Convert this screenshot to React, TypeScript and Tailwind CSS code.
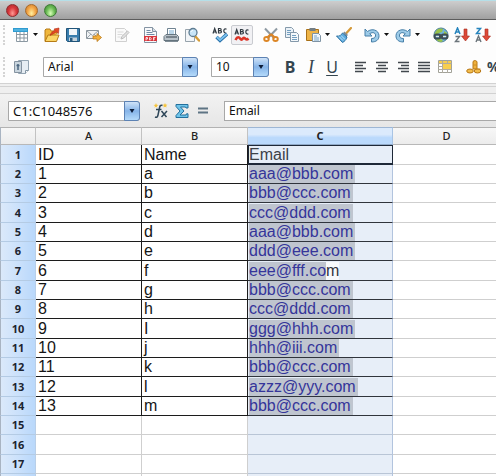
import type { ReactNode } from 'react'

const people = [
  { name: 'a', email: 'aaa@bbb.com' },
  { name: 'b', email: 'bbb@ccc.com' },
  { name: 'c', email: 'ccc@ddd.com' },
  { name: 'd', email: 'aaa@bbb.com' },
  { name: 'e', email: 'ddd@eee.com' },
  { name: 'f', email: 'eee@fff.co', tail: 'm' },
  { name: 'g', email: 'bbb@ccc.com' },
  { name: 'h', email: 'ccc@ddd.com' },
  { name: 'I', email: 'ggg@hhh.com' },
  { name: 'j', email: 'hhh@iii.com' },
  { name: 'k', email: 'bbb@ccc.com' },
  { name: 'l', email: 'azzz@yyy.com' },
  { name: 'm', email: 'bbb@ccc.com' },
]

const emptyRows = [15, 16, 17]

function Icon({ children }: { children: ReactNode }) {
  return (
    <svg viewBox="0 0 16 16" className="block size-4 shrink-0" fill="none" aria-hidden="true">
      {children}
    </svg>
  )
}

function Tool({ label, arrow, children }: { label: string; arrow?: boolean; children: ReactNode }) {
  return (
    <button type="button" aria-label={label} title={label} className="flex shrink-0 items-center">
      <Icon>{children}</Icon>
      {arrow && (
        <svg viewBox="0 0 10 6" className="h-1.5 w-2.5 shrink-0" aria-hidden="true">
          <path d="M4 1h5L6.500 4z" fill="#111" />
        </svg>
      )}
    </button>
  )
}

function Group({ children }: { children: ReactNode }) {
  return <div className="flex shrink-0 items-center gap-[5px]">{children}</div>
}

function Grip() {
  return <div className="h-5 w-0 shrink-0 border-l-2 border-dotted border-[#d4d4d4]" />
}

function Combo({ label, value, className }: { label: string; value: string; className: string }) {
  return (
    <div className={`relative h-5 shrink-0 ${className}`}>
      <select
        aria-label={label}
        className="block h-5 w-full appearance-none rounded-r-[3px] border border-[#a8a8a8] bg-white pl-1 leading-[18px] text-[#111] outline-none"
        defaultValue={value}
      >
        <option>{value}</option>
      </select>
      <span className="pointer-events-none absolute inset-y-0 right-0 flex w-4 items-center justify-center rounded-r-[3px] border border-[#5c82b4] bg-linear-to-b from-[#cfe3f8] via-[#86b4e8] to-[#b4dafa]">
        <svg viewBox="0 0 8 6" className="h-1.5 w-2" aria-hidden="true">
          <path d="M1.500 1h5L4 5z" fill="#0c1c38" />
        </svg>
      </span>
    </div>
  )
}

function Lines({ rows }: { rows: string }) {
  return <path d={rows} stroke="#42484e" strokeWidth="1.300" />
}

function StandardToolbar() {
  return (
    <div className="flex h-[30px] items-center gap-3 bg-[#fdfdfd] pl-[3px]">
      <Grip />
      <div className="-ml-1 flex shrink-0 items-center">
        <Group>
          <Tool label="New" arrow>
            <path d="M3.500 3.500h11v11h-11z" fill="#fff" stroke="#8b98a2" />
            <path d="M3 7.500h12M3 11h12M7 4v11M11 4v11" stroke="#8b98a2" />
            <path d="M0 1h15v4H0z" fill="#2f9bd0" />
            <path d="M1 3h13" stroke="#75c9ed" />
          </Tool>
          <Tool label="Open">
            <path d="M1 14V3l1-1h4l1 2h6v3" fill="#f0b73d" stroke="#b67b16" />
            <path d="M1 14.500 4 8h11l-2.500 6.500z" fill="#fbd565" stroke="#b67b16" />
            <path d="M6 8.500C7 5.500 9 4 11 3.500L10 2l5-1-.5 5.500-1.500-1.500C11 5.500 9 7 6 8.500z" fill="#e54a24" stroke="#b02e15" strokeWidth=".6" />
          </Tool>
          <Tool label="Save">
            <path d="M1.500 1.500h13v13h-12l-1-1z" fill="#397dad" stroke="#205479" />
            <path d="M4 2h8v6H4z" fill="#f2f6f9" />
            <path d="M4 10.500h8V14H4z" fill="#c6d3dc" />
            <path d="M5 11h2.500v3H5z" fill="#2a5d82" />
          </Tool>
          <Tool label="E-mail">
            <path d="M.5 3.500h12v8H.5z" fill="#f1f3f5" stroke="#8b959d" />
            <path d="m1 4 5.500 4.500L12 4M1 11l4-4M12 11 8 7" stroke="#9aa4ac" />
            <path d="M7 9h4V6.500l4.500 4L11 14.500V12H7z" fill="#f4b03b" stroke="#b9781c" strokeWidth=".8" />
          </Tool>
        </Group>
      </div>
      <Group>
        <Tool label="Edit File">
          <path d="M1.500 1.500h9l2 2v11h-11z" fill="#fafafa" stroke="#d0d0d0" />
          <path d="M3.500 5h6M3.500 7.500h5M3.500 10h3" stroke="#dadada" />
          <path d="m7 12 .8-2.500L13.500 4 15 5.500l-5.500 5.700z" fill="#e2e2e2" stroke="#bdbdbd" />
        </Tool>
      </Group>
      <Group>
        <Tool label="Export as PDF">
          <path d="M2.500.5h8l4 4v11h-12z" fill="#f8f9fb" stroke="#8594a3" />
          <path d="M10.500.5v4h4" fill="#d5dde4" stroke="#8594a3" />
          <path d="M4.500 3.500h4M4.500 5.500h6M4.500 7.500h8" stroke="#6f89a3" />
          <path d="M2 9h13v5H2z" fill="#d8343b" />
          <path d="M4 13.500V10.500h1.500v1.500H4M7.500 10.500v2.500h1l.8-1.200-.8-1.300zM11.500 13.500v-3h2M11.500 12h1.500" stroke="#fff" strokeWidth=".8" />
        </Tool>
        <Tool label="Print">
          <path d="M4.500 1.500h8v7h-8z" fill="#fff" stroke="#6f8391" />
          <path d="M6 4h5M6 6h5" stroke="#78aed4" />
          <path d="M1 9.500 3 7.500h10.500l2 2v4H1z" fill="#b9c3ca" stroke="#65747e" />
          <path d="M3 10h11" stroke="#4a5760" strokeWidth="1.200" />
          <path d="M2 14.500h13" stroke="#7f8c95" />
        </Tool>
        <Tool label="Page Preview">
          <path d="M1.500 2.500h9v12h-9z" fill="#f2f5f8" stroke="#97a3ac" />
          <path d="m11 9 4 4.500" stroke="#d59c36" strokeWidth="2.400" strokeLinecap="round" />
          <circle cx="9" cy="5.500" r="4" fill="#c8e5f7" stroke="#5e7c92" strokeWidth="1.300" />
          <path d="M7 5c.3-1 1-1.500 2-1.500" stroke="#fff" />
        </Tool>
      </Group>
      <Group>
        <Tool label="Spelling">
          <path d="m1 6.500 1.700-5 1.800 5M1.700 5h2M6.500 1.500v4.500H8c2 0 2-2.300 0-2.300H6.500 8c1.500 0 1.500-2.200 0-2.200zM14.500 2.200c-3-1.700-4 4-.2 4" stroke="#303a42" strokeWidth="1.200" />
          <path d="m4.500 10 3.500 3.500L15 7" stroke="#2770aa" strokeWidth="3.400" />
          <path d="m4.800 10 3.200 3L14.800 7.200" stroke="#7ec3ef" strokeWidth="1.800" />
        </Tool>
        <button
          type="button"
          aria-label="AutoSpellcheck"
          aria-pressed="true"
          className="-mx-0.5 flex h-5 w-[22px] shrink-0 items-center justify-center rounded-xs border border-[#c9cbd0] bg-[#f1f1f4]"
        >
          <Icon>
            <path d="m1 7.500 1.700-5 1.800 5M1.700 6h2M6.500 2.500V7H8c2 0 2-2.300 0-2.300H6.500 8c1.500 0 1.500-2.200 0-2.200zM14.500 3.200c-3-1.700-4 4-.2 4" stroke="#303a42" strokeWidth="1.200" />
            <path d="M1.500 13c2-4 3.500-3 5-1s2.500-2 4-1 2 2.500 4 .5" stroke="#dc3528" strokeWidth="2.600" />
          </Icon>
        </button>
      </Group>
      <Group>
        <Tool label="Cut">
          <path d="M2 1.500 11 11M14 1.500 5 11" stroke="#8d99a2" strokeWidth="2" />
          <path d="m8 7-4 4M8 7l4 4" stroke="#d98427" strokeWidth="2.400" />
          <ellipse cx="3.500" cy="12" rx="2.300" ry="2" stroke="#dc8626" strokeWidth="1.900" />
          <ellipse cx="12.500" cy="12" rx="2.300" ry="2" stroke="#dc8626" strokeWidth="1.900" />
        </Tool>
        <Tool label="Copy">
          <path d="M1.500.5h6l2 2v8h-8z" fill="#eaf1f7" stroke="#8499aa" />
          <path d="M3 3.500h4M3 5.500h5M3 7.500h5" stroke="#739fc0" />
          <path d="M6.500 5.500h6l2 2v7h-8z" fill="#f4f8fb" stroke="#8499aa" />
          <path d="M8 8.500h4M8 10.500h5M8 12.500h5" stroke="#739fc0" />
        </Tool>
        <Tool label="Paste" arrow>
          <path d="M1.500 2.500h12v11h-12z" fill="#eeb447" stroke="#a87018" />
          <path d="M4.500 1h6v3h-6z" fill="#727d84" />
          <path d="M7.500 6.500h6l2 2v6h-8z" fill="#f1f6fa" stroke="#7e93a4" />
          <path d="M9 9h3M9 11h5M9 13h5" stroke="#7ba5c5" />
        </Tool>
        <Tool label="Clone Formatting">
          <path d="M15 1 10.500 6" stroke="#d59a3a" strokeWidth="2.200" strokeLinecap="round" />
          <path d="M8.500 4.500 12 8l-1.500 1.500L7 6z" fill="#7e8d98" />
          <path d="M6.500 6 11 10c-.5 2.500-2.500 4.500-4.500 5.500L.5 9c3 .5 4.500-.5 6-3z" fill="#5dacdf" stroke="#2d71a2" />
          <path d="m3 9.500 4 4M5 8.500l4 4" stroke="#c3e4f8" />
        </Tool>
      </Group>
      <Group>
        <Tool label="Undo" arrow>
          <path d="M1 2v7h7L5.700 6.700C9 4.500 12 6 11.500 9c-.3 1.800-1.700 2.500-4 2.500V15c5 0 7.700-2.500 7.500-6.500C14.700 3 8 1 3.500 4.500z" fill="#9dcbe8" stroke="#477fa8" />
        </Tool>
        <Tool label="Redo" arrow>
          <path d="M15 2v7H8l2.300-2.300C7 4.500 4 6 4.500 9c.3 1.800 1.700 2.500 4 2.500V15C3.500 15 .8 12.500 1 8.500 1.300 3 8 1 12.500 4.500z" fill="#9dcbe8" stroke="#477fa8" />
        </Tool>
      </Group>
      <Group>
        <Tool label="Hyperlink">
          <circle cx="8" cy="8" r="7" fill="#6fb2da" stroke="#4d7f94" />
          <path d="M3 4c2-3 5-3 7-2L9 5 6 6 4 8 1.500 7zM11 4l3 2v3l-3-2zM3 12l4-1 3 3-2 1c-2 0-4-1-5-3z" fill="#98c24a" />
          <rect x="1.500" y="7.500" width="6" height="4" rx="2" stroke="#3f4c52" strokeWidth="2" />
          <rect x="8.500" y="7.500" width="6" height="4" rx="2" stroke="#3f4c52" strokeWidth="2" />
          <path d="M6 9.500h4" stroke="#3f4c52" strokeWidth="2" />
          <path d="M3 9.500h3M10 9.500h3" stroke="#dfe6e6" />
        </Tool>
        <Tool label="Sort Ascending">
          <path d="M1 7 3.500 1 6 7M2 5h3" stroke="#2684bd" strokeWidth="1.500" />
          <path d="M1.500 9.500h4l-4 5h4" stroke="#6c757b" strokeWidth="1.400" />
          <path d="M10 2h3v7h2.500l-4 5-4-5H10z" fill="#dd4938" stroke="#a62c1e" strokeWidth=".6" />
        </Tool>
        <Tool label="Sort Descending">
          <path d="M1.500 1.500h4l-4 5h4" stroke="#2684bd" strokeWidth="1.500" />
          <path d="m1 15 2.500-6L6 15M2 13h3" stroke="#6c757b" strokeWidth="1.400" />
          <path d="M10 2h3v7h2.500l-4 5-4-5H10z" fill="#dd4938" stroke="#a62c1e" strokeWidth=".6" />
        </Tool>
      </Group>
    </div>
  )
}

function FormattingToolbar() {
  return (
    <div className="flex h-[33px] items-center gap-[13px] bg-[#fdfdfd] pl-[3px]">
      <Grip />
      <div className="-ml-1 shrink-0">
        <Tool label="Styles">
          <path d="M4.500 1.500h10v10l-3 3h-7z" fill="#e6edf3" stroke="#93a4b2" />
          <path d="M14.500 11.500h-3v3" fill="#fff" stroke="#8496a5" />
          <path d="M.5 2.500h7v11h-7z" fill="#c9d5de" stroke="#8492a0" />
          <path d="M4 5v6M2.500 6.500h3" stroke="#4b6680" strokeWidth="1.500" />
        </Tool>
      </div>
      <Combo label="Font Name" value="Arial" className="w-[155px]" />
      <Combo label="Font Size" value="10" className="w-[58px]" />
      <div className="flex shrink-0 items-center gap-[5px] text-base leading-5 text-[#34454f]">
        <button type="button" className="w-4 text-center font-bold">B</button>
        <button type="button" className="w-4 text-center font-['Liberation_Serif',serif] text-lg leading-5 italic">I</button>
        <button type="button" className="w-4 text-center underline underline-offset-2">U</button>
      </div>
      <Group>
        <Tool label="Align Left">
          <Lines rows="M2 3.500h11M2 6.500h8M2 9.500h11M2 12.500h8" />
        </Tool>
        <Tool label="Center">
          <Lines rows="M2 3.500h12M4 6.500h8M2 9.500h12M4 12.500h8" />
        </Tool>
        <Tool label="Align Right">
          <Lines rows="M3 3.500h11M6 6.500h8M3 9.500h11M6 12.500h8" />
        </Tool>
        <Tool label="Justified">
          <Lines rows="M2 3.500h12M2 6.500h12M2 9.500h12M2 12.500h12" />
        </Tool>
        <Tool label="Merge Cells">
          <path d="M1.500 1.500h13v12h-13z" fill="#fff" stroke="#a2a299" />
          <path d="M2 2h12v2H2zM6 5h8v5H6z" fill="#f7cf50" />
          <path d="M1.500 4.500h13M1.500 10.500h13M5.500 2v12M10.500 2v3M10.500 10v4M1.500 7.500h4" stroke="#b0aca0" />
        </Tool>
      </Group>
      <Group>
        <Tool label="Currency">
          <path d="M7 2.500c1-1.500 4-1 4 .5v7H7z" fill="#efb13d" stroke="#b87817" />
          <ellipse cx="4" cy="12" rx="3.300" ry="2" fill="#f3bd4d" stroke="#b87817" />
          <ellipse cx="11.500" cy="12" rx="3.300" ry="2" fill="#f3bd4d" stroke="#b87817" />
          <path d="M8.500 10h6M7 6h4" stroke="#ca8b25" />
        </Tool>
        <button type="button" className="w-4 shrink-0 text-left text-sm leading-5 font-bold text-[#34454f]">%</button>
      </Group>
    </div>
  )
}

function FormulaBar() {
  return (
    <div className="flex h-[33px] items-center gap-[13px] bg-linear-to-b from-[#f2f2f2] to-[#e6e6e6] pl-2">
      <Combo label="Name Box" value="C1:C1048576" className="w-[132px] text-[13px]" />
      <Group>
        <Tool label="Function Wizard">
          <path d="m3 0 .7 1.800L5.500 2l-1.500 1 .3 1.700L3 3.800 1.500 4.700 2 3 .5 2l1.800-.2zM12 0l.7 1.500 1.800.3-1.300 1 .3 1.700L12 3.800l-1.500.7.3-1.700-1.300-1 1.800-.3z" fill="#f5c33b" />
          <path d="M9.500 2.500c-2-1-2.700.5-3 2.500L5 12c-.4 2-1.300 2.700-3 2M3 6.500h5.500" stroke="#2e4658" strokeWidth="1.500" />
          <path d="m8.500 8 5 6M14 8l-5.500 6" stroke="#2e4658" strokeWidth="1.500" />
        </Tool>
        <Tool label="Sum">
          <path d="M2 1.500h12v3.500h-2l-.5-1H6.500L10 8l-4 4h6l.5-1.200H14v3.700H2v-2L6 8 2 3.500z" fill="#6fc4e9" stroke="#236f9c" />
        </Tool>
        <Tool label="Function">
          <path d="M3 5.500h10M3 9.500h10" stroke="#5e7484" strokeWidth="1.800" />
        </Tool>
      </Group>
      <input
        aria-label="Input line"
        defaultValue="Email"
        className="h-5 min-w-0 flex-1 border border-r-0 border-[#a8a8a8] bg-white pl-1 text-[#111] outline-none"
      />
    </div>
  )
}

function RowHeader({ n }: { n?: number }) {
  return (
    <th
      scope="row"
      className="border-r border-b border-l border-r-[#b9cfe8] border-b-[#b4cbe4] border-l-[#a9b4c2] bg-linear-to-r from-[#dbe9fa] via-[#cbe1fb] to-[#b9d8fb] p-0 text-center text-[11px] leading-[18px] font-bold text-[#1c2430]"
    >
      {n}
    </th>
  )
}

function EmptyRow({ n }: { n?: number }) {
  const blank = 'border-b border-[#cfcfcf] p-0'
  return (
    <tr>
      <RowHeader n={n} />
      <td className={`${blank} border-r`} />
      <td className={`${blank} border-r`} />
      <td className="border-r border-b border-r-[#b2c4de] border-b-[#b9c5d6] bg-[#e7eef8] p-0" />
      <td className={blank} />
    </tr>
  )
}

function Sheet() {
  const colHead = 'border-t border-b border-t-[#b2b2b2] border-r-[#c2c2c2] border-b-[#b8b8b8] bg-linear-to-b from-[#f7f7f7] to-[#ececec] p-0 text-center font-medium'
  const cell = 'border-r border-b border-[#1c1c1c] p-0 pl-0.5'
  const selected = 'border-r border-b border-r-[#b2c4de] border-b-[#30343c] bg-[#e7eef8] p-0 pl-px'
  const blank = 'border-b border-[#cfcfcf] p-0'

  return (
    <table className="w-full table-fixed border-separate border-spacing-0">
      <colgroup>
        <col className="w-9" />
        <col className="w-[106px]" />
        <col className="w-[106px]" />
        <col className="w-[145px]" />
        <col />
      </colgroup>
      <thead className="text-[11px] leading-4 text-[#222]">
        <tr className="h-[18px]">
          <th aria-label="Select all" className={`${colHead} border-r border-l border-l-[#a9b4c2]`} />
          <th scope="col" className={`${colHead} border-r`}>A</th>
          <th scope="col" className={`${colHead} border-r`}>B</th>
          <th scope="col" className="border-t border-r border-b border-t-[#9db6d4] border-r-[#a9c4e4] border-b-[#8fa8c6] bg-linear-to-b from-[#dbeafc] from-40% to-[#bad9fc] to-60% p-0 text-center font-bold">C</th>
          <th scope="col" className={`${colHead} pl-1`}>D</th>
        </tr>
      </thead>
      <tbody className="font-['Liberation_Sans',Arial,sans-serif] text-base leading-[18px] text-[#151515] [&_th]:font-['Noto_Sans',sans-serif] [&>tr]:h-[19px] [&>tr:nth-child(3n+1)]:h-5">
        <tr>
          <RowHeader n={1} />
          <td className={cell}>ID</td>
          <td className={cell}>Name</td>
          <td className="border border-[#1e2838] bg-[#e7eef8] p-0 text-[#3c4148] shadow-[inset_0_-1px_0_#1e2838]">Email</td>
          <td className={blank} />
        </tr>
        {people.map((p, i) => (
          <tr key={i}>
            <RowHeader n={i + 2} />
            <td className={cell}>{i + 1}</td>
            <td className={cell}>{p.name}</td>
            <td className={selected}>
              <div className="flex">
                <span className={`bg-[#bfc5cf] text-[#35359a] ${p.tail ? '' : 'pr-0.5'}`}>{p.email}</span>
                {p.tail && <span className="bg-[#f8fafc] text-[#33353c]">{p.tail}</span>}
              </div>
            </td>
            <td className={blank} />
          </tr>
        ))}
        {emptyRows.map((n) => (
          <EmptyRow key={n} n={n} />
        ))}
        <EmptyRow />
      </tbody>
    </table>
  )
}

export default function App() {
  return (
    <div className="h-screen overflow-hidden bg-white font-['Noto_Sans',sans-serif] text-xs">
      <header className="flex h-5 items-center gap-1.5 border-t border-b border-t-[#b5dfe8] border-b-[#5c5c5c] bg-linear-to-b from-[#cdcdcd] to-[#a0a0a0] pl-1.5">
        <button type="button" aria-label="Close" className="size-[13px] rounded-full border border-[#8e2b2e] bg-radial-[at_50%_75%] from-[#ff9a94] via-[#d8383c] to-[#a02428]" />
        <button type="button" aria-label="Minimize" className="size-[13px] rounded-full border border-[#a86a28] bg-radial-[at_50%_75%] from-[#fff0a0] via-[#f4a848] to-[#c87424]" />
        <button type="button" aria-label="Zoom" className="size-[13px] rounded-full border border-[#3d7a34] bg-radial-[at_50%_75%] from-[#d8ffb8] via-[#6fbe58] to-[#35802e]" />
      </header>
      <StandardToolbar />
      <FormattingToolbar />
      <div className="h-[11px] border-t border-b border-[#d2d2d2] bg-[#efefef] pt-0.5">
        <div className="border-t border-[#d2d2d2]" />
      </div>
      <FormulaBar />
      <Sheet />
    </div>
  )
}
